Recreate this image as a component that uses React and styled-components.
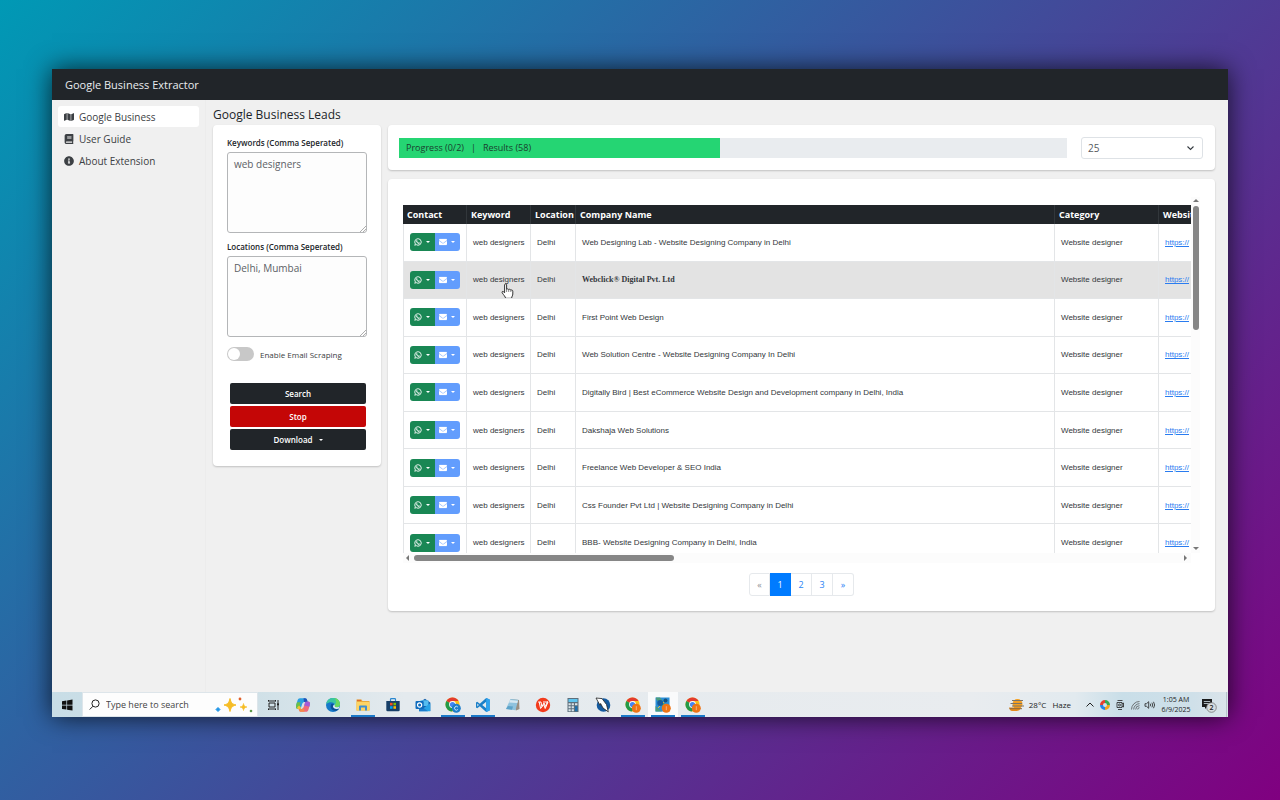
import React from "react";
import styled, { createGlobalStyle, css } from "styled-components";
import { FaMap, FaBook, FaInfoCircle, FaWhatsapp, FaEnvelope } from "react-icons/fa";

const UI = `"Open Sans", "Noto Sans", sans-serif`;
const ARIAL = `"Liberation Sans", Arial, sans-serif`;

const GlobalStyle = createGlobalStyle`
  *, *::before, *::after { box-sizing: border-box; }
  body {
    margin: 0;
    font-family: ${UI};
    font-size: 10px;
    color: #212529;
  }
  button, input, select, textarea { font: inherit; color: inherit; margin: 0; }
`;

const Desktop = styled.div`
  min-height: 100vh;
  padding: 69px 52px 83px;
  display: flex;
  background: linear-gradient(135deg, #0099b5 0%, #800080 100%);
`;

const Window = styled.div`
  flex: 1;
  min-width: 0;
  display: flex;
  flex-direction: column;
  background: #f0f0f0;
  box-shadow: 0 0 24px rgba(0, 0, 0, 0.75);
`;

const TopBar = styled.header`
  padding: 0 13px;
  line-height: 31px;
  font-size: 11px;
  font-weight: 500;
  color: #e9ecef;
  background: #212529;
`;

const Body = styled.div`
  flex: 1;
  display: flex;
  align-items: stretch;
`;

const Sidebar = styled.nav`
  width: 154px;
  flex: none;
  padding: 6px;
  display: flex;
  flex-direction: column;
  gap: 1px;
  border-right: 1px solid #ececec;
`;

const NavLink = styled.a`
  display: flex;
  align-items: center;
  gap: 5px;
  height: 21px;
  padding: 0 6px;
  border-radius: 3px;
  font-size: 10px;
  font-weight: 500;
  color: #3c4044;
  text-decoration: none;
  background: ${(p) => (p.$active ? "#fff" : "transparent")};
  svg { width: 10px; height: 10px; }
`;

const Main = styled.main`
  flex: 1;
  min-width: 0;
  padding: 4px 13px 0 7px;
`;

const Title = styled.h1`
  margin: 0;
  font-size: 12px;
  line-height: 21px;
  font-weight: 500;
`;

const Columns = styled.div`
  display: flex;
  align-items: flex-start;
  gap: 7px;
`;

const Card = styled.section`
  background: #fff;
  border-radius: 4px;
  box-shadow: 0 1px 2px rgba(0, 0, 0, 0.2);
`;

const FormCard = styled(Card)`
  width: 168px;
  flex: none;
  padding: 11px 14px 16px;
`;

const Field = styled.div`
  position: relative;
  margin-bottom: 7px;
`;

const Label = styled.label`
  display: block;
  font-size: 8px;
  line-height: 14px;
  font-weight: 600;
  margin-bottom: 2px;
`;

const TextArea = styled.textarea`
  display: block;
  width: 100%;
  height: 81px;
  padding: 4px 6px;
  line-height: 14px;
  color: #5c6166;
  background: #fdfdfd;
  border: 1px solid #b4b6b8;
  border-radius: 3px;
  resize: none;
  outline: none;
`;

const Grip = styled.svg`
  position: absolute;
  right: 1px;
  bottom: 1px;
  width: 6px;
  height: 6px;
`;

const SwitchRow = styled.div`
  display: flex;
  align-items: center;
  gap: 6px;
  margin: 10px 0 22px;
  label { font-size: 8px; font-weight: 500; color: #3a3e42; }
`;

const Switch = styled.input`
  appearance: none;
  width: 27px;
  height: 14px;
  padding: 1px;
  border-radius: 7px;
  background: #c8c8c8;
  &::before {
    content: "";
    display: block;
    width: 12px;
    height: 12px;
    border-radius: 50%;
    background: #fff;
  }
`;

const Actions = styled.div`
  display: flex;
  flex-direction: column;
  gap: 2px;
  padding: 0 1px 0 3px;
`;

const ActionButton = styled.button`
  height: 21px;
  padding: 0;
  display: flex;
  align-items: center;
  justify-content: center;
  gap: 6px;
  border: 0;
  border-radius: 2px;
  font-size: 8px;
  font-weight: 600;
  color: #fff;
  background: ${(p) => (p.$danger ? "#c40606" : "#212529")};
`;

const Caret = styled.span`
  border: 2px solid transparent;
  border-top-color: currentColor;
  border-bottom: 0;
`;

const RightColumn = styled.div`
  flex: 1;
  min-width: 0;
  display: flex;
  flex-direction: column;
  gap: 9px;
`;

const ProgressCard = styled(Card)`
  display: flex;
  align-items: center;
  gap: 14px;
  height: 45px;
  padding: 0 12px 0 11px;
`;

const ProgressTrack = styled.div`
  flex: 1;
  height: 20px;
  background: #e9ecef;
`;

const ProgressFill = styled.div`
  height: 100%;
  padding: 0 7px;
  display: flex;
  align-items: center;
  gap: 7px;
  font-size: 9px;
  font-weight: 500;
  color: #1a3d2e;
  background: #25d573;
  white-space: nowrap;
`;

const SelectBox = styled.div`
  position: relative;
  width: 122px;
  select {
    display: block;
    appearance: none;
    width: 100%;
    height: 22px;
    padding: 0 6px;
    color: #55595d;
    background: #fff;
    border: 1px solid #dee2e6;
    border-radius: 3px;
  }
  svg {
    position: absolute;
    right: 8px;
    top: 7px;
    width: 9px;
    height: 8px;
    pointer-events: none;
  }
`;

const TableCard = styled(Card)`
  padding: 18px 15px 15px;
`;

const ScrollGrid = styled.div`
  display: grid;
  grid-template-columns: minmax(0, 1fr) 9px;
  grid-template-rows: 356px 10px;
`;

const Viewport = styled.div`
  padding-top: 8px;
  overflow: hidden;
`;

const Table = styled.table`
  width: 100%;
  height: 357px;
  table-layout: fixed;
  border-collapse: separate;
  border-spacing: 0;
`;

const Col = styled.col`
  width: ${(p) => (p.$w ? `${p.$w}px` : "auto")};
`;

const Th = styled.th`
  height: 19px;
  padding: 0 4px;
  overflow: hidden;
  text-align: left;
  white-space: nowrap;
  font-size: 9px;
  line-height: 14px;
  font-weight: 700;
  color: #fff;
  background: #212529;
  border-right: 1px solid #32373b;
  &:last-child { border-right: 0; padding-right: 0; }
`;

const Row = styled.tr`
  background: ${(p) => (p.$hover ? "#e3e3e3" : "#fff")};
`;

const Td = styled.td`
  position: relative;
  padding: 0 6px;
  overflow: hidden;
  white-space: nowrap;
  font-family: ${(p) => (p.$serif ? `"Liberation Serif", serif` : ARIAL)};
  font-weight: ${(p) => (p.$serif ? 700 : 400)};
  font-size: 8px;
  color: #33373b;
  border-right: 1px solid #e3e5e7;
  border-bottom: 1px solid #e3e5e7;
  &:first-child { border-left: 1px solid #e3e5e7; }
  &:last-child { border-right: 0; }
  a { color: #2a7cf0; }
`;

const ButtonPair = styled.div`
  display: flex;
`;

const ContactButton = styled.button`
  height: 18px;
  padding: 0;
  display: flex;
  align-items: center;
  justify-content: center;
  gap: 4px;
  border: 0;
  color: #fff;
  svg { width: 8px; height: 8px; stroke: currentColor; stroke-width: 14px; }
  ${(p) =>
    p.$mail
      ? css`width: 26px; background: #629dfd; border-radius: 0 3px 3px 0;`
      : css`width: 25px; background: #198754; border-radius: 3px 0 0 3px;`}
`;

const HandCursor = styled.svg`
  position: absolute;
  left: 34px;
  top: 21px;
  width: 13px;
  height: 16px;
`;

const VBar = styled.div`
  display: flex;
  flex-direction: column;
  align-items: center;
  justify-content: space-between;
  padding: 2px 0 3px;
  background: #fcfcfc;
`;

const VThumbArea = styled.div`
  flex: 1;
  width: 6px;
  padding: 4px 0;
  div { height: 124px; border-radius: 3px; background: #868686; }
`;

const HBar = styled.div`
  display: flex;
  align-items: center;
  padding: 0 4px 0 3px;
  background: #fcfcfc;
`;

const HThumbArea = styled.div`
  flex: 1;
  padding: 0 5px;
  div { width: 34%; height: 6px; border-radius: 3px; background: #868686; }
`;

const Arrow = styled.svg`
  width: ${(p) => (p.$side ? 3 : 6)}px;
  height: ${(p) => (p.$side ? 6 : 3)}px;
  fill: #777;
`;

const Pagination = styled.nav`
  display: flex;
  justify-content: center;
  margin-top: 10px;
`;

const PageLink = styled.a`
  width: 21px;
  height: 23px;
  display: flex;
  align-items: center;
  justify-content: center;
  font-size: 9px;
  text-decoration: none;
  border: 1px solid ${(p) => (p.$active ? "#007bff" : "#e6e9ec")};
  color: ${(p) => (p.$active ? "#fff" : p.$muted ? "#8c9196" : "#2c84f5")};
  background: ${(p) => (p.$active ? "#007bff" : "#fff")};
  & + & { border-left: 0; }
  &:first-child { border-radius: 3px 0 0 3px; }
  &:last-child { border-radius: 0 3px 3px 0; }
`;

const Taskbar = styled.footer`
  display: flex;
  height: 25px;
  background: linear-gradient(90deg, #c8dde6 0%, #cfe0e7 17%, #e4eaee 30%, #e9ecef 78%, #e2eaef 87%, #c9dee8 91%, #cfe0e9 97%, #dbe4ea 100%);
`;

const TaskButton = styled.button`
  width: 30px;
  padding: 0;
  display: flex;
  align-items: center;
  justify-content: center;
  border: 0;
  background: ${(p) =>
    p.$open
      ? `linear-gradient(#1a78c8, #1a78c8) center bottom / 24px 2px no-repeat ${p.$active ? "#f9fafb" : "transparent"}`
      : "transparent"};
  svg { width: 16px; height: 16px; }
`;

const SearchBox = styled.label`
  width: 176px;
  display: flex;
  align-items: center;
  gap: 6px;
  padding: 0 4px 0 6px;
  background: #fdfdfd;
  border: 1px solid #dde5ea;
  input {
    flex: 1;
    min-width: 0;
    padding: 0;
    border: 0;
    outline: 0;
    background: none;
    font-size: 9px;
    color: #444;
    &::placeholder { color: #444; opacity: 1; }
  }
`;

const Spacer = styled.div`
  flex: 1;
`;

const Tray = styled.div`
  display: flex;
  align-items: center;
  gap: 3px;
  font-size: 8px;
  font-weight: 500;
  color: #222;
  white-space: nowrap;
`;

const Weather = styled.div`
  display: flex;
  align-items: center;
  gap: 4px;
  padding-right: 10px;
  span + span { padding-left: 2px; }
`;

const TrayIcon = styled.svg`
  width: 12px;
  height: 12px;
`;

const Clock = styled.div`
  width: 34px;
  display: flex;
  flex-direction: column;
  align-items: center;
  font-size: 7px;
  line-height: 10px;
`;

const Notice = styled.div`
  display: flex;
  align-items: center;
  height: 100%;
  padding: 0 9px 0 5px;
  margin-right: 1px;
  border-right: 1px solid #b8c4cb;
`;

const rows = [
  "Web Designing Lab - Website Designing Company in Delhi",
  "Webclick® Digital Pvt. Ltd",
  "First Point Web Design",
  "Web Solution Centre - Website Designing Company In Delhi",
  "Digitally Bird | Best eCommerce Website Design and Development company in Delhi, India",
  "Dakshaja Web Solutions",
  "Freelance Web Developer & SEO India",
  "Css Founder Pvt Ltd | Website Designing Company in Delhi",
  "BBB- Website Designing Company in Delhi, India",
];

const Resize = () => (
  <Grip viewBox="0 0 6 6" stroke="#999" strokeWidth="0.8">
    <path d="M0 6L6 0M3 6L6 3" />
  </Grip>
);

const Hand = () => (
  <HandCursor viewBox="0 0 13 16">
    <path
      d="M3.6 1.8C3.6 .6 5.6 .6 5.6 1.8V6.4C6 5.6 7.5 5.7 7.7 6.7C8.2 6 9.6 6.2 9.8 7.2C10.4 6.7 11.8 6.9 11.8 8.2V11C11.8 12.6 10.8 13.2 10.6 15.3H4.6C4.4 13.6 2.6 12 1.2 9.8C.5 8.6 1.8 7.9 2.7 8.8L3.6 9.8Z"
      fill="#fff" stroke="#333" strokeWidth="1" strokeLinejoin="round"
    />
    <path d="M5.6 6.4V9M7.7 6.8V9M9.8 7.2V9" stroke="#555" strokeWidth=".7" />
  </HandCursor>
);

const Chrome = ({ badge, mark }) => (
  <svg viewBox="0 0 16 16">
    <circle cx="7.5" cy="7.5" r="7" fill="#fbc116" />
    <path d="M7.5 7.5L1.4 4A7 7 0 0 1 13.6 4H7.5Z" fill="#e33b2e" />
    <path d="M7.5 7.5L1.4 4A7 7 0 0 0 7 14.5L10.5 9.2Z" fill="#229a4a" />
    <circle cx="7.5" cy="7.5" r="3.4" fill="#fff" />
    <circle cx="7.5" cy="7.5" r="2.6" fill="#4285f4" />
    <circle cx="11.3" cy="11.2" r="4.5" fill={badge} />
    {mark === "c" ? (
      <path d="M12.8 10A1.9 1.9 0 1 0 12.8 12.5" fill="none" stroke="#cde6fb" strokeWidth="1" />
    ) : (
      <path d="M11.3 9.2V13.2" stroke="#f9b984" strokeWidth=".9" />
    )}
  </svg>
);

const taskIcons = [
  {
    name: "Task View",
    art: (
      <svg viewBox="0 0 16 16" fill="none" stroke="#222" strokeWidth="1">
        <path d="M4 6H10V10H4ZM3.5 4.500V3M10.500 4.500V3M3.500 4H10.500M3.500 11.500V13M10.500 11.500V13M3.500 12H10.500M13 3V6M13 9V13" />
        <path d="M12.5 6.500H13.500V8.300H12.500Z" fill="#222" />
      </svg>
    ),
  },
  {
    name: "Copilot",
    art: (
      <svg viewBox="0 0 16 16">
        <path d="M5 1.2H10C11.3 1.2 11.8 2 12.2 3.4L12.8 5H9.5C8 5 7.5 6 7 7.5L5.6 12H3.5C1 12 .6 10 1.3 7.5L2.5 3.5C3 2 3.7 1.2 5 1.2Z" fill="#2a9fe0" />
        <path d="M1.3 7.5L2 5.2H5.5L4.3 10.8L5.6 12H3.5C1 12 .6 10 1.3 7.5Z" fill="#6cc04a" />
        <path d="M2.2 10.5L4 8.5L6 10.5L5.6 12H3.5C2.6 12 2.2 11.5 2.2 10.5Z" fill="#f5c431" />
        <path d="M11 14.8H6C4.7 14.8 4.2 14 3.8 12.6L3.5 12H6.5C8 12 8.5 10.5 9 9L10.4 4.5H12.5C15 4.5 15.4 6 14.7 8.5L13.5 12.5C13 14 12.3 14.8 11 14.8Z" fill="#ef6b7b" />
        <path d="M10.4 4.5H12.5C15 4.5 15.4 6 14.7 8.5L14.3 9.8L9.2 8.6Z" fill="#a35bd6" />
        <path d="M3.7 12H6.5C7.5 12 8 11.4 8.4 10.6L9.6 14.8H6C4.7 14.8 4.2 14 3.7 12Z" fill="#f38a4b" />
        <path d="M8.5 1.2H10C11.3 1.2 11.8 2 12.2 3.4L12.5 4.5L9 5Z" fill="#2450b8" />
      </svg>
    ),
  },
  {
    name: "Edge",
    art: (
      <svg viewBox="0 0 16 16">
        <circle cx="8" cy="8" r="7" fill="#1679c9" />
        <path d="M1.2 7C2 2 6 .6 9.2 1.1C13 1.6 15.2 4.6 15 7.4C14.8 9.7 12.4 10.6 10.2 10C9 9.6 9.8 9 9.8 7.8C9.6 5.2 5 4 1.2 7Z" fill="#3bc5a0" />
        <path d="M9.5 1.1C13 1.6 15.2 4.6 15 7.4C14.8 9.7 12.4 10.6 10.2 10C9.2 9.6 9.8 9 9.8 7.8C12 7 11 3 9.5 1.1Z" fill="#6bd860" />
        <path d="M6.2 7.2C4.5 10.5 7 14 10.8 13.8C12 13.7 13 13.2 13.8 12C11 12.6 8.2 11.5 8 9.2C8 8.2 8.4 8 8.6 7.4C8.2 6.6 6.8 6.4 6.2 7.2Z" fill="#0c4f96" />
        <path d="M8 9.2C8 8.2 9.2 8 9.6 7.2C10 8.5 9.2 9.4 10.2 10C11.6 10.6 13.4 10.2 14.3 9.4L13.8 11.6C11 12.4 8.2 11.5 8 9.2Z" fill="#e8f1f5" />
      </svg>
    ),
  },
  {
    name: "File Explorer",
    open: true,
    art: (
      <svg viewBox="0 0 16 16">
        <path d="M1.5 2.5H6.5L7.5 4H14.5V13.5H1.5Z" fill="#e9a93a" />
        <path d="M1.5 5H14.5V13.5H1.5Z" fill="#fdd465" />
        <path d="M2 2.8H6V4H2Z" fill="#e06a2a" />
        <path d="M4 13.5V9.5Q4 8.5 5 8.5H11Q12 8.5 12 9.5V13.5H10V10.5H6V13.5Z" fill="#3f8fd0" />
      </svg>
    ),
  },
  {
    name: "Store",
    art: (
      <svg viewBox="0 0 16 16">
        <path d="M5.5 4V2.5Q5.5 1.7 6.3 1.7H9.7Q10.5 1.7 10.5 2.5V4" fill="none" stroke="#2a87cf" strokeWidth="1.2" />
        <path d="M1.3 4H14.7V13Q14.7 14.3 13.4 14.3H2.6Q1.3 14.3 1.3 13Z" fill="#173f68" />
        <path d="M5 5.8H7.6V8.4H5Z" fill="#f25022" /><path d="M8.4 5.8H11V8.4H8.4Z" fill="#7fba00" />
        <path d="M5 9.2H7.6V11.8H5Z" fill="#00a4ef" /><path d="M8.4 9.2H11V11.8H8.4Z" fill="#ffb900" />
      </svg>
    ),
  },
  {
    name: "Outlook",
    art: (
      <svg viewBox="0 0 16 16">
        <path d="M5 5L10 1.8L15.3 5.5V14H5Z" fill="#1460ab" />
        <path d="M5.5 3.3H13.5V9H5.5Z" fill="#55bdf0" />
        <path d="M4 14.2L15.3 6.3V14.2Z" fill="#27a3e6" /><path d="M4 7.5L13 14.2H4Z" fill="#1c7dcc" />
        <rect x=".5" y="4" width="8.2" height="8" rx="1" fill="#0f6cbd" />
        <circle cx="4.6" cy="8" r="2.1" fill="none" stroke="#fff" strokeWidth="1.2" />
      </svg>
    ),
  },
  { name: "Chrome", open: true, art: <Chrome badge="#1e7fcb" mark="c" /> },
  {
    name: "Visual Studio Code",
    open: true,
    art: (
      <svg viewBox="0 0 16 16">
        <path d="M11.2 1L14.7 2.6V13.4L11.2 15L4.8 9.2L2.2 11.2L1 10.5V5.5L2.2 4.8L4.8 6.8ZM11.2 4.8L7.2 8L11.2 11.2ZM2.3 6.4V9.6L3.9 8Z" fill="#1a7fc8" fillRule="evenodd" />
        <path d="M11.2 1L14.7 2.6V13.4L11.2 15Z" fill="#2ea3ee" />
      </svg>
    ),
  },
  {
    name: "Notepad",
    art: (
      <svg viewBox="0 0 16 16">
        <path d="M5.5 2L14 3L14.5 12L11 13.5Z" fill="#9a8f82" />
        <path d="M5.5 2L13.2 2.8L10.5 13.3L1 12Z" fill="#8fc3de" />
        <path d="M5.3 3L13 3.8L12.3 6L4 5.4Z" fill="#d7e9f2" />
        <path d="M3 9L8 9.6L7 12.8L1 12Z" fill="#5ca3c9" />
      </svg>
    ),
  },
  {
    name: "WPS Office",
    art: (
      <svg viewBox="0 0 16 16">
        <circle cx="8" cy="8" r="7.2" fill="#f23b1c" />
        <path d="M3.2 5H6L6.8 9.5L9 6L10.5 9.5L12.5 4.5M4.2 5L5.6 11.5L8.7 7.5L10.2 11.5L13 5H8" fill="none" stroke="#fff" strokeWidth="1" />
      </svg>
    ),
  },
  {
    name: "Calculator",
    art: (
      <svg viewBox="0 0 16 16">
        <rect x="2.5" y="1" width="11" height="14" fill="#5d6f7c" />
        <rect x="3.5" y="2" width="9" height="3" fill="#5fc4ee" />
        <path d="M3.5 6.2H5.7V8.2H3.5ZM6.7 6.2H8.9V8.2H6.7ZM3.5 9.2H5.7V11.2H3.5ZM6.7 9.2H8.9V11.2H6.7ZM3.5 12.2H5.7V14.2H3.5ZM6.7 12.2H8.9V14.2H6.7ZM10 6.2H12.4V8.2H10Z" fill="#dbe5ea" />
        <path d="M10 9.2H12.4V14.2H10Z" fill="#1c6fae" />
      </svg>
    ),
  },
  {
    name: "Pen",
    art: (
      <svg viewBox="0 0 16 16">
        <circle cx="8.5" cy="8" r="6.8" fill="#155a9f" />
        <path d="M1 1L7 1.600L11.500 7.500L13.300 14.800L8 11L5.600 6.500L5 8.200Z" fill="#fff" stroke="#222" strokeWidth=".8" />
      </svg>
    ),
  },
  { name: "Chrome profile", open: true, art: <Chrome badge="#ef7414" /> },
  {
    name: "Business Extractor",
    open: true,
    active: true,
    art: (
      <svg viewBox="0 0 16 16">
        <rect x=".5" y=".5" width="14" height="14" fill="#2b8fd8" />
        <path d="M.5 9L7 14.5H.5ZM1 .5H5L14 12V14.5H11L1 2Z" fill="#4c9c7c" />
        <path d="M3 11L11.5 2.5" stroke="#f2c12e" strokeWidth="1" />
        <circle cx="5.2" cy="6" r="3" fill="#175c9c" /><circle cx="10.5" cy="3.6" r="2" fill="#174f7c" />
        <circle cx="11.3" cy="11.2" r="4.5" fill="#ef7414" />
        <path d="M11.3 9.2V13.2" stroke="#f9b984" strokeWidth=".9" />
      </svg>
    ),
  },
  { name: "Chrome window", open: true, art: <Chrome badge="#ef7414" /> },
];

const Sparkles = () => (
  <svg width="38" height="16" viewBox="0 0 38 16">
    <path d="M15 1.500C16 5.800 17 7 21 8C17 9.200 16 10.300 15 14.500C14 10.300 13 9.200 9 8C13 7 14 5.800 15 1.500Z" fill="#f6bd27" stroke="#f6bd27" strokeLinejoin="round" />
    <path d="M28.5 6.5C29 9 29.5 9.500 32 10C29.500 10.600 29 11.300 28.500 13.500C28 11.300 27.500 10.600 25 10C27.500 9.500 28 9 28.500 6.500Z" fill="#f6bd27" stroke="#f6bd27" strokeWidth=".6" />
    <path d="M3 10.5L5 12.5L3 14.5L1 12.5Z" fill="#2196e8" stroke="#2196e8" />
    <circle cx="25" cy="2" r="1.4" fill="#e0602a" />
    <circle cx="36" cy="14" r="1.3" fill="#5f9a4a" />
  </svg>
);

export default function App() {
  return (
    <>
      <GlobalStyle />
      <Desktop>
        <Window>
          <TopBar>Google Business Extractor</TopBar>
          <Body>
            <Sidebar>
              <NavLink href="#business" $active><FaMap />Google Business</NavLink>
              <NavLink href="#guide"><FaBook />User Guide</NavLink>
              <NavLink href="#about"><FaInfoCircle />About Extension</NavLink>
            </Sidebar>
            <Main>
              <Title>Google Business Leads</Title>
              <Columns>
                <FormCard>
                  <Field>
                    <Label htmlFor="keywords">Keywords (Comma Seperated)</Label>
                    <TextArea id="keywords" defaultValue="web designers" />
                    <Resize />
                  </Field>
                  <Field>
                    <Label htmlFor="locations">Locations (Comma Seperated)</Label>
                    <TextArea id="locations" defaultValue="Delhi, Mumbai" />
                    <Resize />
                  </Field>
                  <SwitchRow>
                    <Switch type="checkbox" id="scrape" />
                    <label htmlFor="scrape">Enable Email Scraping</label>
                  </SwitchRow>
                  <Actions>
                    <ActionButton>Search</ActionButton>
                    <ActionButton $danger>Stop</ActionButton>
                    <ActionButton>Download<Caret /></ActionButton>
                  </Actions>
                </FormCard>
                <RightColumn>
                  <ProgressCard>
                    <ProgressTrack>
                      <ProgressFill style={{ width: "48%" }}>
                        <span>Progress (0/2)</span><span>|</span><span>Results (58)</span>
                      </ProgressFill>
                    </ProgressTrack>
                    <SelectBox>
                      <select aria-label="Rows per page" defaultValue="25">
                        <option>25</option>
                        <option>50</option>
                      </select>
                      <svg viewBox="0 0 9 8" fill="none" stroke="#343a40" strokeWidth="1.1"><path d="M1.5 2.5L4.5 5.5L7.5 2.5" /></svg>
                    </SelectBox>
                  </ProgressCard>
                  <TableCard>
                    <ScrollGrid>
                      <Viewport>
                        <Table>
                          <colgroup>
                            <Col $w={64} /><Col $w={64} /><Col $w={45} /><Col /><Col $w={104} /><Col $w={32} />
                          </colgroup>
                          <thead>
                            <tr>
                              {["Contact", "Keyword", "Location", "Company Name", "Category", "Website"].map((h) => (
                                <Th key={h}>{h}</Th>
                              ))}
                            </tr>
                          </thead>
                          <tbody>
                            {rows.map((name, i) => (
                              <Row key={name} $hover={i === 1}>
                                <Td>
                                  <ButtonPair>
                                    <ContactButton aria-label="WhatsApp"><FaWhatsapp /><Caret /></ContactButton>
                                    <ContactButton aria-label="Email" $mail><FaEnvelope /><Caret /></ContactButton>
                                  </ButtonPair>
                                </Td>
                                <Td>web designers{i === 1 && <Hand />}</Td>
                                <Td>Delhi</Td>
                                <Td $serif={i === 1}>{name}</Td>
                                <Td>Website designer</Td>
                                <Td><a href="#site">https://</a></Td>
                              </Row>
                            ))}
                          </tbody>
                        </Table>
                      </Viewport>
                      <VBar>
                        <Arrow viewBox="0 0 6 3"><path d="M0 3L3 0L6 3Z" /></Arrow>
                        <VThumbArea><div /></VThumbArea>
                        <Arrow viewBox="0 0 6 3"><path d="M0 0L3 3L6 0Z" /></Arrow>
                      </VBar>
                      <HBar>
                        <Arrow $side viewBox="0 0 3 6"><path d="M3 0L0 3L3 6Z" /></Arrow>
                        <HThumbArea><div /></HThumbArea>
                        <Arrow $side viewBox="0 0 3 6"><path d="M0 0L3 3L0 6Z" /></Arrow>
                      </HBar>
                    </ScrollGrid>
                    <Pagination aria-label="Pages">
                      <PageLink href="#prev" $muted>«</PageLink>
                      <PageLink href="#1" $active>1</PageLink>
                      <PageLink href="#2">2</PageLink>
                      <PageLink href="#3">3</PageLink>
                      <PageLink href="#next">»</PageLink>
                    </Pagination>
                  </TableCard>
                </RightColumn>
              </Columns>
            </Main>
          </Body>
          <Taskbar>
            <TaskButton aria-label="Start">
              <svg viewBox="0 0 16 16" fill="#111"><path d="M3 4.200L7.400 3.500V7.700H3ZM8.100 3.400L13.500 2.600V7.700H8.100ZM3 8.400H7.400V12.600L3 11.900ZM8.100 8.400H13.500V13.500L8.100 12.700Z" /></svg>
            </TaskButton>
            <SearchBox>
              <svg width="11" height="11" viewBox="0 0 11 11" fill="none" stroke="#222"><circle cx="6.5" cy="4.5" r="3.6" /><path d="M4 7.200L.7 10.500" /></svg>
              <input aria-label="Search" placeholder="Type here to search" />
              <Sparkles />
            </SearchBox>
            {taskIcons.map((t) => (
              <TaskButton key={t.name} aria-label={t.name} $open={t.open} $active={t.active}>{t.art}</TaskButton>
            ))}
            <Spacer />
            <Tray>
              <Weather>
                <svg width="17" height="14" viewBox="0 0 17 14">
                  <circle cx="9.5" cy="6" r="5" fill="#f6a021" />
                  <path d="M4 2.500H15M2.500 5.500H14M4 8H16" stroke="#7c7468" strokeWidth="1.1" />
                  <path d="M1 9.500H13Q12 13 8 13H4Q2 13 1 9.500Z" fill="#e58a1e" />
                  <path d="M1.500 10.700H14" stroke="#8a6a3e" strokeWidth="1" />
                </svg>
                <span>28°C</span><span>Haze</span>
              </Weather>
              <TrayIcon viewBox="0 0 12 12" fill="none" stroke="#222" strokeWidth="1"><path d="M2.500 7.500L6 4L9.500 7.500" /></TrayIcon>
              <TrayIcon viewBox="0 0 12 12" fill="none" strokeWidth="3">
                <path d="M2.500 6A3.500 3.500 0 0 1 6 2.500" stroke="#e6402f" />
                <path d="M6 2.500A3.500 3.500 0 0 1 9.500 6" stroke="#36a852" />
                <path d="M9.500 6A3.500 3.500 0 0 1 6 9.500" stroke="#f2a31f" />
                <path d="M6 9.500A3.500 3.500 0 0 1 2.500 6" stroke="#2583e6" />
              </TrayIcon>
              <TrayIcon viewBox="0 0 12 12" fill="none" stroke="#222" strokeWidth=".8">
                <path d="M3.500 1.500H8.500M3 3.500H8V8.500H3ZM8 5L9.500 4V8L8 7M4 10.500H8" /><circle cx="5.5" cy="6" r="1" />
              </TrayIcon>
              <TrayIcon viewBox="0 0 12 12" fill="none" stroke="#444" strokeWidth=".7">
                <path d="M2.500 10.500A8 8 0 0 1 10.500 2.500M4.700 10.500A5.800 5.800 0 0 1 10.500 4.700M6.700 10.500A3.800 3.800 0 0 1 10.500 6.700M8.700 10.500A1.800 1.800 0 0 1 10.500 8.700" />
              </TrayIcon>
              <TrayIcon viewBox="0 0 12 12" fill="none" stroke="#222" strokeWidth=".8">
                <path d="M1 4.700H2.500L4.700 2.700V9.300L2.500 7.300H1ZM6.300 4.700Q7.200 6 6.300 7.300M7.900 3.700Q9.600 6 7.900 8.300M9.500 2.800Q11.800 6 9.500 9.200" />
              </TrayIcon>
              <Clock><span>1:05 AM</span><span>6/9/2025</span></Clock>
              <Notice>
                <svg width="16" height="16" viewBox="0 0 16 16">
                  <path d="M1 2H11V10H6L4 12V10H1Z" fill="#1c1c1c" />
                  <path d="M2.800 4.500H9.200M2.800 6.500H9.200" stroke="#cfdde4" strokeWidth=".8" />
                  <circle cx="10.5" cy="10.5" r="4.8" fill="#d5dce0" stroke="#777" strokeWidth=".8" />
                  <text x="10.5" y="13" fontSize="7" fontWeight="600" textAnchor="middle" fill="#222">2</text>
                </svg>
              </Notice>
            </Tray>
          </Taskbar>
        </Window>
      </Desktop>
    </>
  );
}
